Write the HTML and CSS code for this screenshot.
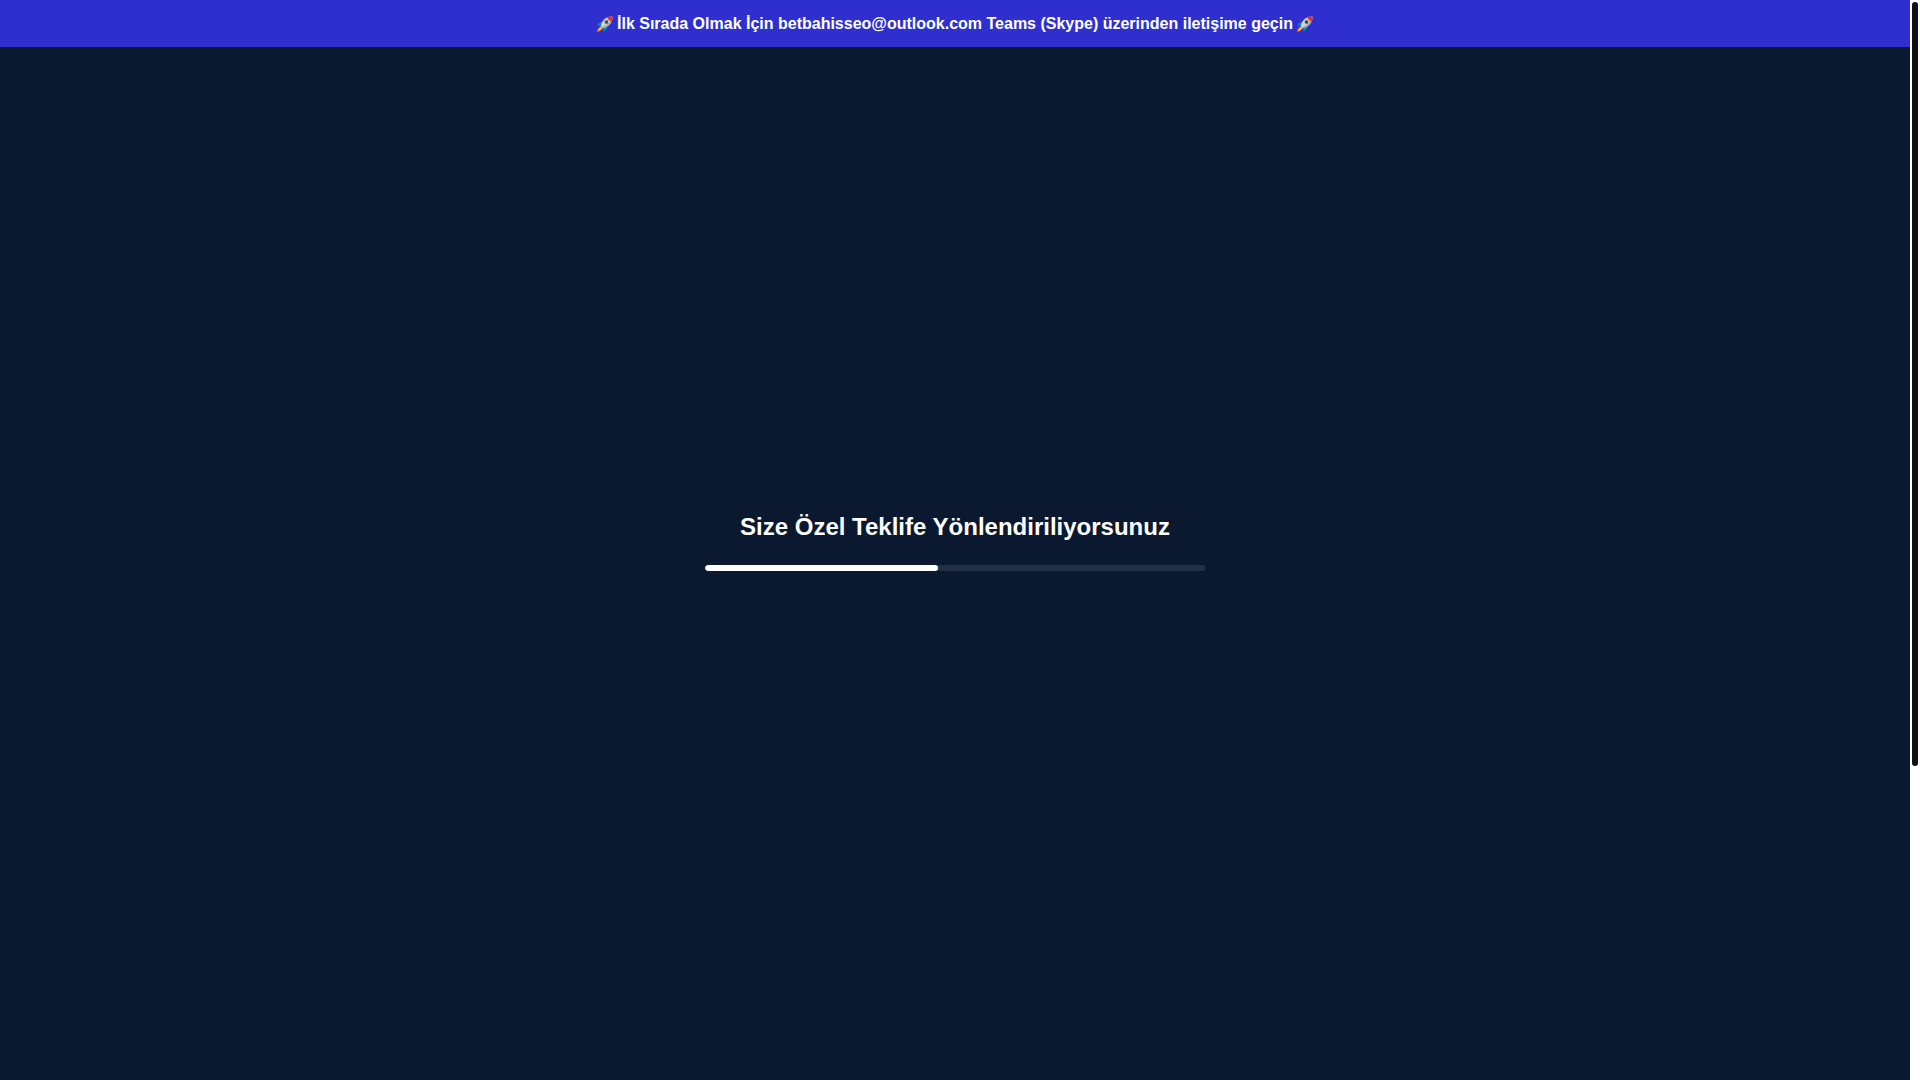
FILE: index.html
```html
<!DOCTYPE html>
<html lang="tr">
<head>
    <meta charset="UTF-8">
    <meta name="viewport" content="width=device-width, initial-scale=1.0">
    <title>Yönlendiriliyorsunuz</title>
    <link rel="stylesheet" href="styles.css">
</head>
<body>
    <svg width="0" height="0" class="icon-defs" aria-hidden="true">
        <symbol id="rocket" viewBox="0 0 32 32">
            <path d="M13 11 L7 12 Q2 15 1 20 L9 19 Z" fill="#0b86ae"/>
            <path d="M21 19 L20 25 Q17 30 12 31 L13 23 Z" fill="#0b86ae"/>
            <path d="M6 21 Q1 24 0 32 Q8 31 11 26 Z" fill="#f44336"/>
            <path d="M7 22 Q3 25 1 31 Q7 29 10 25 Z" fill="#ffca28"/>
            <path d="M6 21 L9 18 L14 23 L11 26 Z" fill="#82aec0"/>
            <path d="M31 1 Q17 1 11 11 Q8 16 8 20 L12 24 Q17 24 22 20 Q31 14 31 1 Z" fill="#d4d4d4"/>
            <path d="M31 1 Q31 14 22 20 Q17 24 12 24 L10 22 Q20 20 27 10 Z" fill="#a5a5a5"/>
            <path d="M31 1 Q25 0 20 3 Q23 9 29 12 Q32 7 31 1 Z" fill="#f02d28"/>
            <circle cx="19" cy="12" r="4" fill="#78868c"/>
            <circle cx="19" cy="12" r="3" fill="#37474f"/>
        </symbol>
    </svg>

    <div class="page">
        <header class="top-banner">
            <svg class="rocket" aria-hidden="true"><use href="#rocket"/></svg>
            <p>İlk Sırada Olmak İçin betbahisseo@outlook.com Teams (Skype) üzerinden iletişime geçin</p>
            <svg class="rocket" aria-hidden="true"><use href="#rocket"/></svg>
        </header>

        <main class="loader">
            <label class="loader-title" for="redirect-progress">Size Özel Teklife Yönlendiriliyorsunuz</label>
            <progress class="loader-bar" id="redirect-progress" value="46.6" max="100"></progress>
        </main>
    </div>

    <div class="scroll-track" aria-hidden="true">
        <div class="scroll-thumb"></div>
    </div>
</body>
</html>
```

FILE: styles.css
```css
* {
    margin: 0;
    padding: 0;
    box-sizing: border-box;
}

body {
    display: flex;
    height: 100vh;
    font-family: "Liberation Sans", Arial, sans-serif;
    background: #0a192f;
    color: #fff;
}

.icon-defs {
    position: absolute;
}

.page {
    position: relative;
    flex: 1;
    min-width: 0;
}

/* stays on top of the loading screen */
.top-banner {
    position: absolute;
    top: 0;
    left: 0;
    right: 0;
    display: flex;
    justify-content: center;
    align-items: center;
    gap: 4px;
    padding: 12px;
    background: #2f2fd0;
    font-size: 16px;
    font-weight: bold;
    line-height: 23px;
    text-align: center;
}

.rocket {
    flex: none;
    width: 16px;
    height: 16px;
}

.loader {
    display: flex;
    flex-direction: column;
    justify-content: center;
    align-items: center;
    gap: 20px;
    height: 100%;
}

.loader-title {
    font-size: 24px;
    font-weight: bold;
    line-height: 36px;
    text-align: center;
}

.loader-bar {
    appearance: none;
    display: block;
    width: 500px;
    max-width: 80%;
    height: 6px;
    border: none;
    border-radius: 3px;
    overflow: hidden;
    background: #243143;
}

.loader-bar::-webkit-progress-bar {
    background: #243143;
    border-radius: 3px;
}

.loader-bar::-webkit-progress-value {
    background: #fff;
    border-radius: 3px;
}

.scroll-track {
    width: 10px;
    padding: 2px;
    background: #fff;
}

.scroll-thumb {
    height: 71%;
    background: #111;
    border-radius: 3px;
}
```
